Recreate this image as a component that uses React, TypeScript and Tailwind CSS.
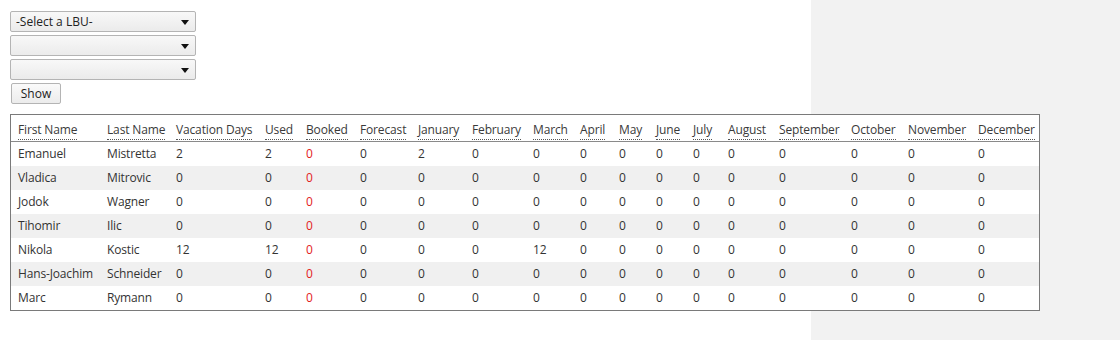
import React from 'react';

interface Row {
  first: string;
  last: string;
  vacation: number;
  used: number;
  booked: number;
  forecast: number;
  months: number[];
}

const headers = [
  'First Name', 'Last Name', 'Vacation Days', 'Used', 'Booked', 'Forecast',
  'January', 'February', 'March', 'April', 'May', 'June', 'July', 'August',
  'September', 'October', 'November', 'December',
];

// column widths taken from the screenshot
const gridCols =
  'grid grid-cols-[89px_69px_89px_41px_54px_58px_54px_61px_47px_39px_37px_37px_35px_51px_72px_57px_70px_68px]';

const zeros = (n: number) => Array.from({ length: n }, () => 0);

const rows: Row[] = [
  { first: 'Emanuel', last: 'Mistretta', vacation: 2, used: 2, booked: 0, forecast: 0, months: [2, ...zeros(11)] },
  { first: 'Vladica', last: 'Mitrovic', vacation: 0, used: 0, booked: 0, forecast: 0, months: zeros(12) },
  { first: 'Jodok', last: 'Wagner', vacation: 0, used: 0, booked: 0, forecast: 0, months: zeros(12) },
  { first: 'Tihomir', last: 'Ilic', vacation: 0, used: 0, booked: 0, forecast: 0, months: zeros(12) },
  { first: 'Nikola', last: 'Kostic', vacation: 12, used: 12, booked: 0, forecast: 0, months: [0, 0, 12, ...zeros(9)] },
  { first: 'Hans-Joachim', last: 'Schneider', vacation: 0, used: 0, booked: 0, forecast: 0, months: zeros(12) },
  { first: 'Marc', last: 'Rymann', vacation: 0, used: 0, booked: 0, forecast: 0, months: zeros(12) },
];

const Select = ({ label }: { label?: string }) => (
  <div className="flex items-center justify-between w-[186px] h-[21px] border border-[#b4b4b4] rounded-[2px] bg-gradient-to-b from-[#f8f8f8] to-[#ebebeb] pl-[5px] pr-[6px] text-[12px] text-[#222]">
    <span>{label ?? ''}</span>
    <svg width="8" height="5" viewBox="0 0 8 5" className="mt-px">
      <path d="M0 0 H8 L4 5 Z" fill="#111" />
    </svg>
  </div>
);

export default function App() {
  return (
    <div
      className="w-[1120px] h-[340px] bg-[linear-gradient(to_right,#ffffff_811px,#f2f2f2_811px)] pt-[11px] pl-[10px] text-[#333]"
      style={{ fontFamily: '"Segoe UI", "Open Sans", "Noto Sans", sans-serif' }}
    >
      <div className="flex flex-col gap-[3px]">
        <Select label="-Select a LBU-" />
        <Select />
        <Select />
        <button className="ml-px w-[50px] h-[21px] border border-[#b4b4b4] rounded-[2px] bg-gradient-to-b from-[#fafafa] to-[#ececec] text-[12px] text-[#222] leading-none">
          Show
        </button>
      </div>

      <div className="mt-[10px] w-[1030px] border border-[#7a7a7a] bg-white text-[12px] tracking-[-0.15px]">
        <div className={`${gridCols} h-[27px] items-center border-b border-[#8a8a8a] pt-[3px]`}>
          {headers.map((h) => (
            <div key={h} className="pl-[7px] whitespace-nowrap">
              <span className="border-b border-dotted border-[#555] pb-px text-[#3a3a3a]">{h}</span>
            </div>
          ))}
        </div>
        {rows.map((r, i) => {
          const values = [r.vacation, r.used, r.booked, r.forecast, ...r.months];
          return (
            <div key={r.first} className={`${gridCols} h-[24px] items-center ${i % 2 === 1 ? 'bg-[#f0f0f0]' : 'bg-white'}`}>
              <div className="pl-[7px] whitespace-nowrap">{r.first}</div>
              <div className="pl-[7px] whitespace-nowrap">{r.last}</div>
              {values.map((v, j) => (
                <div key={j} className={`pl-[7px] ${j === 2 ? 'text-[#e3221c]' : ''}`}>
                  {v}
                </div>
              ))}
            </div>
          );
        })}
      </div>
    </div>
  );
}
